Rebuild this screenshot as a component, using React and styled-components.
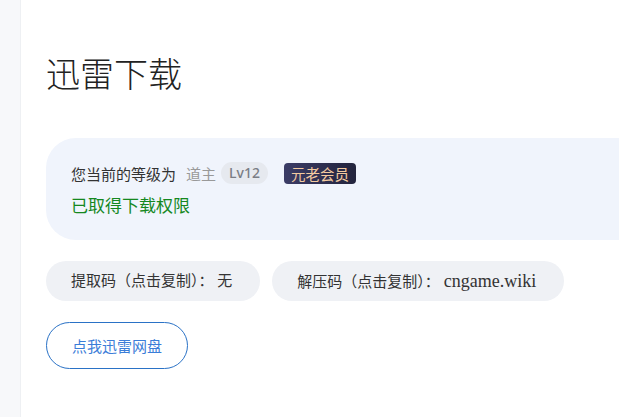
import React from 'react';
import styled, { createGlobalStyle } from 'styled-components';

const GlobalStyle = createGlobalStyle`
  html, body {
    margin: 0;
    padding: 0;
    background: #fff;
    overflow: hidden;
  }
  body {
    font-family: "Noto Sans CJK SC", "Noto Sans", sans-serif;
    color: #333;
  }
`;

const Page = styled.div`
  display: flex;
  min-height: 417px;
  overflow: hidden;
`;

const Sidebar = styled.div`
  flex: 0 0 20px;
  background: #f7f8fa;
  border-right: 1px solid #eef0f3;
`;

const Main = styled.div`
  flex: 1;
  min-width: 0;
  padding: 52px 0 0 25px;
`;

const Title = styled.h1`
  margin: 0 0 45px;
  font-size: 34px;
  line-height: 41px;
  font-weight: 300;
  color: #222;
`;

// right corners sit off-screen in the reference, so pull the panel past the edge
const InfoPanel = styled.div`
  margin-right: -40px;
  background: #f0f4fc;
  border-radius: 30px 0 0 30px;
  padding: 24px 25px 23px;
  display: flex;
  flex-direction: column;
  gap: 9px;
`;

const LevelRow = styled.div`
  display: flex;
  align-items: center;
  height: 22px;
  font-size: 15px;
  color: #333;
`;

const Rank = styled.span`
  margin-left: 10px;
  color: #999;
`;

const LevelPill = styled.span`
  margin-left: 5px;
  height: 22px;
  line-height: 22px;
  padding: 0 8px;
  border-radius: 11px;
  background: #e6e9ef;
  color: #7a7d85;
  font-size: 14px;
  font-weight: 500;
  font-family: "Noto Sans", "Noto Sans CJK SC", sans-serif;
`;

const VipBadge = styled.span`
  margin-left: 16px;
  height: 21px;
  line-height: 21px;
  padding: 0 7px;
  border-radius: 4px;
  background: linear-gradient(90deg, #3b3c66, #23243d);
  color: #f3caa0;
  font-size: 14.5px;
`;

const Granted = styled.div`
  font-size: 17px;
  line-height: 24px;
  color: #15881f;
`;

const CodeRow = styled.div`
  display: flex;
  gap: 12px;
  margin-top: 21px;
`;

const CodePill = styled.div`
  height: 40px;
  line-height: 40px;
  padding: 0 28px 0 25px;
  border-radius: 20px;
  background: #eff1f5;
  font-size: 15px;
  color: #333;
  font-family: "Liberation Serif", "Noto Sans CJK SC", serif;
  white-space: nowrap;
  cursor: pointer;
`;

const CodeValue = styled.span`
  margin-left: 4px;
  font-size: 18px;
`;

const PanButton = styled.button`
  display: block;
  margin-top: 21px;
  width: 142px;
  height: 47px;
  border: 1px solid #2a72c6;
  border-radius: 24px;
  background: #fff;
  color: #3b7dd8;
  font-size: 15px;
  font-family: "Noto Sans CJK SC", sans-serif;
  cursor: pointer;
`;

export default function App() {
  return (
    <>
      <GlobalStyle />
      <Page>
        <Sidebar />
        <Main>
          <Title>迅雷下载</Title>
          <InfoPanel>
            <LevelRow>
              您当前的等级为
              <Rank>道主</Rank>
              <LevelPill>Lv12</LevelPill>
              <VipBadge>元老会员</VipBadge>
            </LevelRow>
            <Granted>已取得下载权限</Granted>
          </InfoPanel>
          <CodeRow>
            <CodePill>提取码（点击复制）： 无</CodePill>
            <CodePill>解压码（点击复制）：<CodeValue>cngame.wiki</CodeValue></CodePill>
          </CodeRow>
          <PanButton>点我迅雷网盘</PanButton>
        </Main>
      </Page>
    </>
  );
}
